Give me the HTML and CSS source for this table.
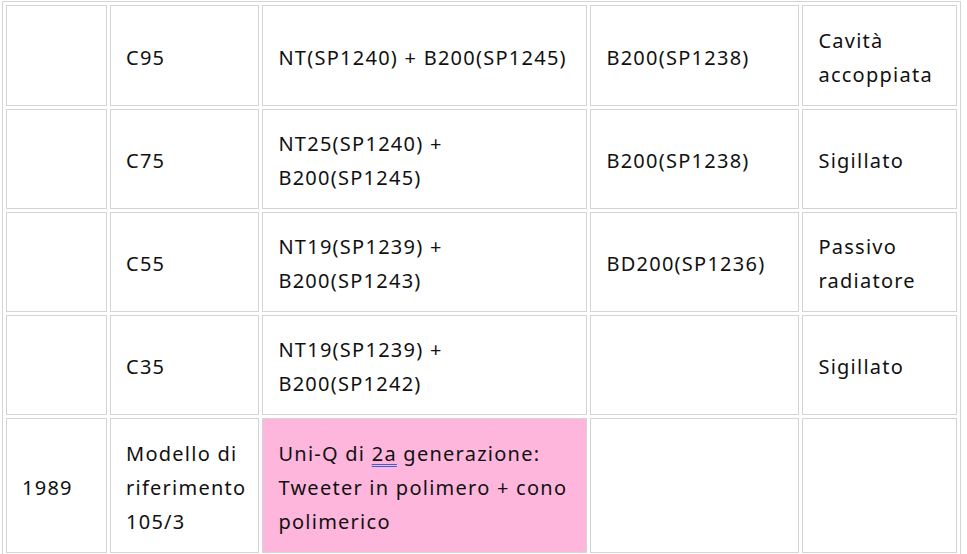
FILE: index.html
```html
<!DOCTYPE html>
<html lang="it">
<head>
<meta charset="utf-8">
<title>Tabella</title>
<link rel="stylesheet" href="styles.css">
</head>
<body>
<table class="grid">
  <colgroup>
    <col class="c1"><col class="c2"><col class="c3"><col class="c4"><col class="c5">
  </colgroup>
  <tbody>
    <tr class="first">
      <td></td>
      <td>C95</td>
      <td>NT(SP1240) + B200(SP1245)</td>
      <td>B200(SP1238)</td>
      <td>Cavità accoppiata</td>
    </tr>
    <tr>
      <td></td>
      <td>C75</td>
      <td>NT25(SP1240) +<br>B200(SP1245)</td>
      <td>B200(SP1238)</td>
      <td>Sigillato</td>
    </tr>
    <tr>
      <td></td>
      <td>C55</td>
      <td>NT19(SP1239) +<br>B200(SP1243)</td>
      <td>BD200(SP1236)</td>
      <td>Passivo radiatore</td>
    </tr>
    <tr>
      <td></td>
      <td>C35</td>
      <td>NT19(SP1239) +<br>B200(SP1242)</td>
      <td></td>
      <td>Sigillato</td>
    </tr>
    <tr class="tall">
      <td>1989</td>
      <td>Modello di riferimento 105/3</td>
      <td class="pink">Uni-Q di <u class="spell">2a</u> generazione: Tweeter in polimero + cono polimerico</td>
      <td></td>
      <td></td>
    </tr>
  </tbody>
</table>
</body>
</html>
```

FILE: styles.css
```css
html, body {
  margin: 0;
  padding: 0;
  background: #ffffff;
}

body {
  padding: 1px 0 0 2px;
  font-family: "Noto Sans", "Noto Sans CJK KR", sans-serif;
  font-size: 20px;
  letter-spacing: 1.25px;
  color: #111111;
}

.grid {
  border: 1px solid #d4d4d4;
  border-spacing: 3px;
  border-collapse: separate;
  table-layout: fixed;
}

.c1 { width: 101px; }
.c2 { width: 148px; }
.c3 { width: 325px; }
.c4 { width: 209px; }
.c5 { width: 155px; }

.grid td {
  box-sizing: border-box;
  border: 1px solid #d4d4d4;
  padding: 17px 12px 13px 15px;
  line-height: 34px;
  vertical-align: middle;
  text-align: left;
  overflow: hidden;
}

.grid tr td {
  height: 100px;
}

.grid tr.first td {
  height: 101px;
}

.grid tr.tall td {
  height: 135px;
}

.grid td.pink {
  background: #feb6dd;
}

.spell {
  text-decoration-line: underline;
  text-decoration-style: double;
  text-decoration-color: #3a5fd9;
  text-decoration-thickness: 1px;
  text-underline-offset: 3px;
}
```
